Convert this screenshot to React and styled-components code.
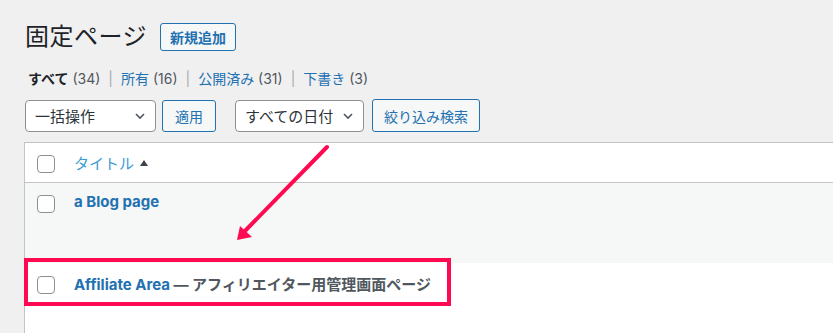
import React from 'react';
import styled, { createGlobalStyle } from 'styled-components';

const GlobalStyle = createGlobalStyle`
    body {
        margin: 0;
        background: #f0f0f1;
        font-family: Inter, "Noto Sans CJK JP", sans-serif;
        color: #3c434a;
        overflow: hidden;
    }
`;

const Wrap = styled.div`
    position: relative;
    height: 333px;
    padding: 19px 0 0 24px;
    box-sizing: border-box;
`;

const Header = styled.div`
    display: flex;
    align-items: center;
    gap: 13px;
    padding-left: 1px;

    h1 {
        margin: 0;
        font-size: 24px;
        font-weight: 400;
        letter-spacing: 0.5px;
        color: #1d2327;
        line-height: 36px;
    }
`;

const OutlineButton = styled.button`
    height: ${p => p.$h || 28}px;
    padding: 0 ${p => p.$pad || 9}px;
    border: 1px solid #2271b1;
    border-radius: 3px;
    background: #f6f7f7;
    color: #2271b1;
    font-family: inherit;
    font-size: 14px;
    font-weight: ${p => p.$bold ? 600 : 400};
`;

const Filters = styled.ul`
    display: flex;
    list-style: none;
    margin: 14px 0 0;
    padding: 0 0 0 4px;
    font-size: 14px;
    line-height: 20px;
    color: #50575e;

    li + li::before {
        content: "|";
        color: #a7aaad;
        margin: 0 8px;
    }

    b {
        color: #1d2327;
        font-weight: 700;
    }

    a {
        color: #2271b1;
        text-decoration: none;
    }
`;

const Toolbar = styled.div`
    display: flex;
    align-items: center;
    margin-top: 10px;
    padding-left: 1px;
`;

const Select = styled.div`
    display: flex;
    align-items: center;
    justify-content: space-between;
    width: ${p => p.$w}px;
    height: 32px;
    box-sizing: border-box;
    padding: 0 7px 0 9px;
    margin-right: ${p => p.$mr || 6}px;
    border: 1px solid #8c8f94;
    border-radius: 4px;
    background: #fff;
    font-size: 15px;
    color: #2c3338;
`;

const Spacer = styled.span`
    width: ${p => p.$w}px;
`;

const Table = styled.div`
    margin-top: 10px;
    border: 1px solid #c3c4c7;
    border-right: none;
    background: #fff;
`;

const Row = styled.div`
    position: relative;
    display: flex;
    align-items: flex-start;
    gap: 19px;
    height: ${p => p.$h}px;
    box-sizing: border-box;
    padding: ${p => p.$top}px 0 0 12px;
    background: ${p => p.$alt ? '#f6f7f7' : '#fff'};
    border-bottom: ${p => p.$head ? '1px solid #c3c4c7' : 'none'};
`;

const Check = styled.span`
    width: 16px;
    height: 16px;
    flex: none;
    border: 1px solid #8c8f94;
    border-radius: 4px;
    background: #fff;
`;

const SortLink = styled.span`
    display: flex;
    align-items: center;
    gap: 6px;
    font-size: 15px;
    color: #3c9bd6;
    margin-top: -3px;

    i {
        width: 0;
        height: 0;
        border-left: 4px solid transparent;
        border-right: 4px solid transparent;
        border-bottom: 6px solid #3c434a;
    }
`;

const Title = styled.strong`
    font-size: 15px;
    font-weight: 700;
    color: #50575e;
    margin-top: -3px;

    a {
        color: #2271b1;
        text-decoration: none;
    }
`;

const Highlight = styled.div`
    position: absolute;
    left: -1px;
    top: -5px;
    width: 427px;
    height: 48px;
    box-sizing: border-box;
    border: 4px solid #ff0a52;
    pointer-events: none;
`;

const Arrow = styled.svg`
    position: absolute;
    left: 0;
    top: 0;
    pointer-events: none;
`;

const Chevron = () => (
    <svg width="16" height="16" viewBox="0 0 16 16">
        <path d="M4 6l4 4 4-4" fill="none" stroke="#50575e" strokeWidth="1.6" />
    </svg>
);

const App = () => {
    return (
        <Wrap>
            <GlobalStyle />
            <Header>
                <h1>固定ページ</h1>
                <OutlineButton $bold>新規追加</OutlineButton>
            </Header>
            <Filters>
                <li><b>すべて</b> (34)</li>
                <li><a>所有</a> (16)</li>
                <li><a>公開済み</a> (31)</li>
                <li><a>下書き</a> (3)</li>
            </Filters>
            <Toolbar>
                <Select $w={131} $mr={6}>一括操作<Chevron /></Select>
                <OutlineButton $h={32} $pad={12}>適用</OutlineButton>
                <Spacer $w={19} />
                <Select $w={129} $mr={8}>すべての日付<Chevron /></Select>
                <OutlineButton $h={33} $pad={11}>絞り込み検索</OutlineButton>
            </Toolbar>
            <Table>
                <Row $head $h={40} $top={12}>
                    <Check />
                    <SortLink>タイトル<i /></SortLink>
                </Row>
                <Row $alt $h={80} $top={12}>
                    <Check />
                    <Title><a>a Blog page</a></Title>
                </Row>
                <Row $h={70} $top={13}>
                    <Check />
                    <Title><a>Affiliate Area</a> — アフィリエイター用管理画面ページ</Title>
                    <Highlight />
                </Row>
            </Table>
            <Arrow width="833" height="333" viewBox="0 0 833 333">
                <line x1="327" y1="147" x2="244" y2="232" stroke="#ff0a52" strokeWidth="4" strokeLinecap="round" />
                <polygon points="237,240 240,226 252,237" fill="#ff0a52" />
            </Arrow>
        </Wrap>
    );
};

export default App;
